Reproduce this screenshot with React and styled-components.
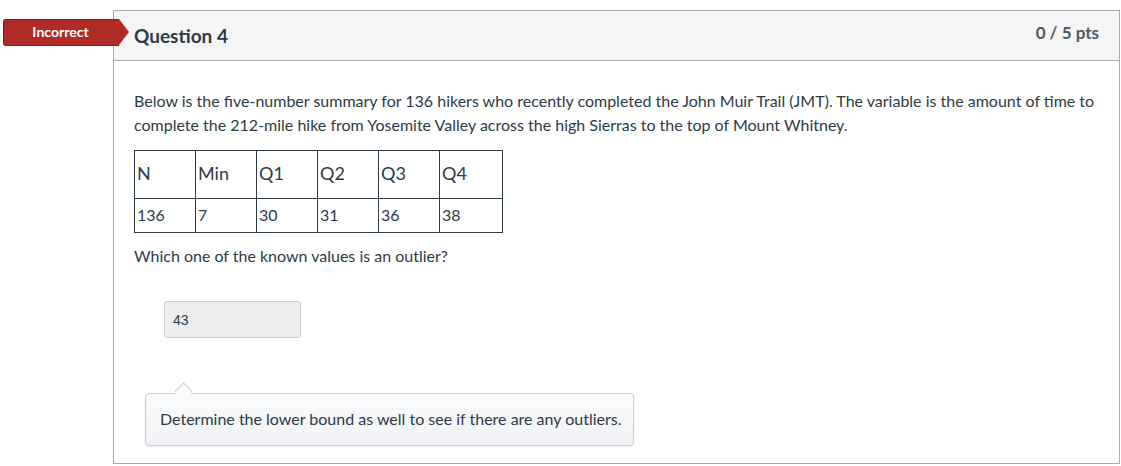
import React from 'react'
import styled, { createGlobalStyle } from 'styled-components'

const GlobalStyle = createGlobalStyle`
  html, body {
    margin: 0;
    padding: 0;
    background: #fff;
    font-family: Lato, "Liberation Sans", sans-serif;
    color: #2d3b45;
  }
`

const Page = styled.div`
  position: relative;
  padding: 10px 0 0 113px;
`

const Badge = styled.div`
  position: absolute;
  left: 3px;
  top: 19px;
  width: 116px;
  height: 27px;
  display: flex;
  align-items: center;
  justify-content: center;
  padding: 0 2px 2px 0;
  box-sizing: border-box;
  background: #b02a26;
  border: 1px solid #8a1c18;
  border-right: none;
  border-radius: 3px 0 0 3px;
  color: #fff;
  font-size: 14px;
  font-weight: 700;
  &::after {
    content: '';
    position: absolute;
    right: -10px;
    top: -1px;
    border-top: 13.5px solid transparent;
    border-bottom: 13.5px solid transparent;
    border-left: 10px solid #b02a26;
  }
`

const Card = styled.div`
  width: 1007px;
  height: 454px;
  box-sizing: border-box;
  border: 1px solid #aaaaaa;
`

const Header = styled.div`
  height: 50px;
  box-sizing: border-box;
  display: flex;
  align-items: center;
  justify-content: space-between;
  padding: 0 20px;
  background: #f5f5f5;
  border-bottom: 1px solid #aaaaaa;
`

const Title = styled.h2`
  margin: 0;
  font-size: 19px;
  font-weight: 700;
  color: #2d3b45;
`

const Points = styled.div`
  margin-bottom: 6px;
  font-size: 17px;
  font-weight: 700;
  color: #4d5962;
`

const Body = styled.div`
  padding: 28px 20px 0 20px;
`

const Text = styled.p`
  margin: 0 0 ${p => p.gap || 0}px;
  font-size: 16px;
  line-height: 24px;
`

const Table = styled.table`
  border-collapse: collapse;
  margin-bottom: 11px;
`

const Row = styled.tr`
  height: ${p => p.h}px;
  font-size: ${p => p.size}px;
`

const Cell = styled.td`
  border: 1px solid #2d3b45;
  padding: 0 2px ${p => p.lift || 0}px;
  width: 56px;
  text-align: left;
  vertical-align: middle;
  &:last-child {
    width: 58px;
  }
`

const Answer = styled.div`
  margin: 33px 0 0 30px;
  width: 137px;
  height: 37px;
  box-sizing: border-box;
  display: flex;
  align-items: center;
  padding-left: 8px;
  background: #ededed;
  border: 1px solid #c7cdd1;
  border-radius: 3px;
  font-family: "Liberation Sans", Arial, sans-serif;
  font-size: 14px;
  color: #2d3b45;
`

const Comment = styled.div`
  position: relative;
  margin: 55px 0 0 11px;
  width: 489px;
  height: 53px;
  box-sizing: border-box;
  display: flex;
  align-items: center;
  padding: 0 0 2px 14px;
  background: linear-gradient(#fafbfc, #f0f2f5);
  border: 1px solid #c7cdd1;
  border-radius: 4px;
  box-shadow: 0 1px 2px rgba(0, 0, 0, 0.08);
  font-size: 16px;
  &::before {
    content: '';
    position: absolute;
    left: 31px;
    top: -9px;
    width: 12px;
    height: 12px;
    background: #fafbfc;
    border-left: 1px solid #c7cdd1;
    border-top: 1px solid #c7cdd1;
    transform: rotate(45deg);
  }
`

const headers = ['N', 'Min', 'Q1', 'Q2', 'Q3', 'Q4']
const values = ['136', '7', '30', '31', '36', '38']

export default function App() {
  return (
    <Page>
      <GlobalStyle />
      <Badge>Incorrect</Badge>
      <Card>
        <Header>
          <Title>Question 4</Title>
          <Points>0 / 5 pts</Points>
        </Header>
        <Body>
          <Text gap={13}>
            Below is the five-number summary for 136 hikers who recently completed the John Muir Trail (JMT). The variable is the amount of time to complete the 212-mile hike from Yosemite Valley across the high Sierras to the top of Mount Whitney.
          </Text>
          <Table>
            <tbody>
              <Row h={48} size={18}>
                {headers.map(h => <Cell key={h} lift={4}>{h}</Cell>)}
              </Row>
              <Row h={34} size={16}>
                {values.map((v, i) => <Cell key={i} lift={2}>{v}</Cell>)}
              </Row>
            </tbody>
          </Table>
          <Text>Which one of the known values is an outlier?</Text>
          <Answer>43</Answer>
          <Comment>Determine the lower bound as well to see if there are any outliers.</Comment>
        </Body>
      </Card>
    </Page>
  )
}
